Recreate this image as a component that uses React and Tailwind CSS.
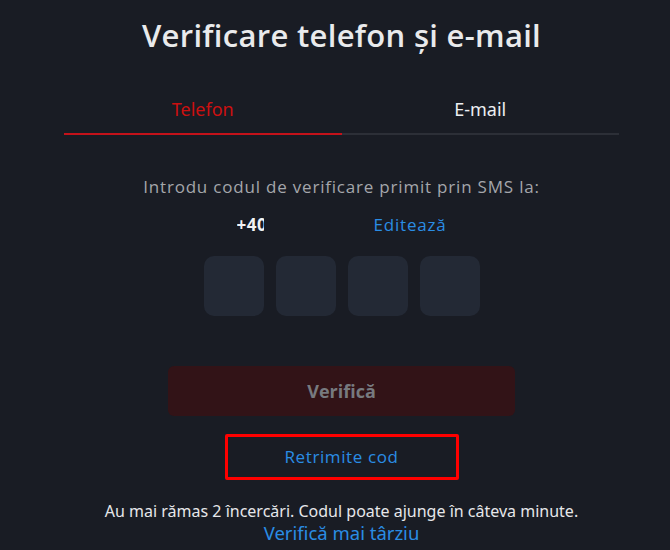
export default function App() {
  const sans = { fontFamily: '"Open Sans", "Noto Sans", sans-serif' };
  return (
    <div className="w-[670px] h-[550px] bg-[#191c24] overflow-hidden" style={sans}>
      <div className="ml-[64px] w-[555px] flex flex-col items-center">
        <h1 className="mt-[15px] text-[31px] leading-[40px] font-semibold text-[#e9eaec] tracking-[0.3px] whitespace-nowrap">
          Verificare telefon și e-mail
        </h1>
        <div className="mt-[30px] w-full grid grid-cols-2 font-['Noto_Sans',sans-serif] text-[18px]">
          <div className="h-[50px] flex items-center justify-center text-[#cc1010] border-b-2 border-[#c4121a]">Telefon</div>
          <div className="h-[50px] flex items-center justify-center text-[#eceef2] border-b-2 border-[#2c2f37]">E-mail</div>
        </div>
        <p className="mt-[40px] text-[17px] leading-[24px] font-medium text-[#a4a6ab] tracking-[0.8px] whitespace-nowrap">
          Introdu codul de verificare primit prin SMS la:
        </p>
        <div className="mt-[14px] w-[210px] flex items-center justify-between text-[17px] leading-[24px]">
          <span className="font-bold text-[#f2f3f5] w-[27px] overflow-hidden whitespace-nowrap tracking-[0.5px]">+40</span>
          <span className="text-[#2a8de4] font-medium tracking-[0.8px]">Editează</span>
        </div>
        <div className="mt-[19px] flex gap-[12px]">
          {[0, 1, 2, 3].map((i) => (
            <div key={i} className="w-[60px] h-[60px] rounded-[10px] bg-[#232935]" />
          ))}
        </div>
        <button className="mt-[50px] w-[347px] h-[50px] rounded-[6px] bg-[#321317] text-[#777a7f] text-[18px] font-bold">
          Verifică
        </button>
        <div className="mt-[18px] w-[234px] h-[46px] border-[3px] border-[#ff0000] rounded-[2px] flex items-center justify-center text-[#2a8de4] text-[17px] font-medium tracking-[0.6px]">
          Retrimite cod
        </div>
        <p className="mt-[22px] whitespace-nowrap text-[16px] leading-[19px] text-[#e6e7ea] font-['Noto_Sans',sans-serif]">
          Au mai rămas 2 încercări. Codul poate ajunge în câteva minute.
        </p>
        <p className="mt-0 text-[18.5px] leading-[24px] text-[#2a8de4] font-['Noto_Sans',sans-serif] whitespace-nowrap">
          Verifică mai târziu
        </p>
      </div>
    </div>
  );
}
